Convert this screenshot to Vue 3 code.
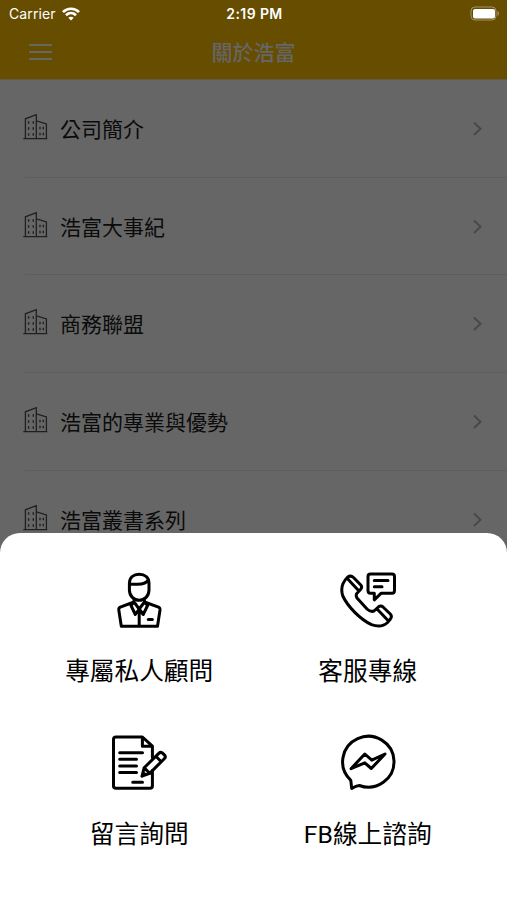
<script setup>
const items = ['公司簡介', '浩富大事紀', '商務聯盟', '浩富的專業與優勢', '浩富叢書系列']
const actions = [
  { icon: 'advisor', label: '專屬私人顧問' },
  { icon: 'phone', label: '客服專線' },
  { icon: 'message', label: '留言詢問' },
  { icon: 'messenger', label: 'FB線上諮詢' },
]
</script>

<template>
  <div class="screen">
    <header class="header">
      <div class="status">
        <div class="carrier">
          <span>Carrier</span>
          <svg width="18" height="14" viewBox="0 0 18 14" fill="none" stroke="#fff" stroke-width="2.7">
            <path d="M1 5.1C5.5.6 12.5.6 17 5.1" />
            <path d="M4 8.3C6.9 5.5 11.1 5.5 14 8.3" />
            <path d="M6.3 10.8C7.8 9.4 10.2 9.4 11.7 10.8L9 13.5Z" fill="#fff" stroke="none" />
          </svg>
        </div>
        <span class="time">2:19 PM</span>
        <svg class="battery" width="30" height="15" viewBox="0 0 30 15">
          <rect x="1" y="1" width="25" height="13" rx="4" fill="none" stroke="#a3946a" />
          <rect x="3" y="3" width="22" height="9.500" rx="2" fill="#fff" />
          <path d="M27.500 4.800Q30.500 7.500 27.500 10.200Z" fill="#a3946a" />
        </svg>
      </div>
      <div class="nav">
        <div class="burger"><i></i><i></i><i></i></div>
        <h1>關於浩富</h1>
        <span></span>
      </div>
    </header>
    <main class="list">
      <div v-for="item in items" :key="item" class="row">
        <svg class="building" width="26" height="28" viewBox="0 0 26 28" fill="none" stroke="#202020" stroke-width="1.3">
          <path d="M1.3 25.7H25.3M3.4 25.5V5.8L14.3 1.6V25.5M14.5 7.9L24.4 11V25.5" />
          <path stroke-width="1.4" stroke-dasharray="2.4 3.6" d="M6.6 8.3V24M11.3 8.3V24M18 13.8V24M21.3 13.8V24" />
        </svg>
        <span class="name">{{ item }}</span>
        <svg class="chevron" width="12" height="18" viewBox="0 0 12 18" fill="none" stroke="#484848" stroke-width="1.9">
          <path d="M2 2.5L8.5 8.7L2 15" />
        </svg>
      </div>
    </main>
    <section class="sheet">
      <div v-for="action in actions" :key="action.icon" class="action">
        <svg width="60" height="60" viewBox="0 0 60 60" fill="none" stroke="#000" stroke-width="3" stroke-linecap="round" stroke-linejoin="round">
          <template v-if="action.icon === 'advisor'">
            <path d="M20.400 13.500C20.400 7.500 24.500 4.200 30.200 4.200S40 7.500 40 13.500V20C40 26 35.500 30.300 30.200 30.300S20.400 26 20.400 20ZM20.500 14.300H28.500C33.500 14.300 37.500 13.300 39.500 9.500" />
            <path d="M25 30.500V32L11.300 37.200Q9.500 38 9.800 40L12.300 56.300H48.500L51 40Q51.200 38 49.500 37.200L35.500 32V30.500M30.200 39V56M25 32L22 35.500L26.300 44.500L30.200 39L25 32M35.500 32L38.600 35.500L34.200 44.500L30.200 39L35.500 32" />
            <path d="M39.300 49.500H43.300" />
          </template>
          <template v-else-if="action.icon === 'phone'">
            <path d="M32.500 4H54Q56.500 4 56.500 6.700V20.600Q56.500 23.300 54 23.300H43L36.300 29.800V23.300H32.500Q30 23.300 30 20.600V6.700Q30 4 32.500 4ZM36.300 10.600H50M36.300 16.700H44" />
            <path d="M9.500 7.200Q12.700 4.800 15.500 7.500L22.800 15Q24.600 17.200 22.500 19.500L19 23.300Q17.400 25 19 28L29 39Q32.500 42.300 36 41L40.300 37Q42.700 35 45 37L52.300 44Q54.500 46.500 52.200 49.300L49.500 52.500Q43.500 58.300 33.500 54.700C22 49 10 37 4.800 26C2.500 19 3.200 13.500 9.500 7.200ZM10 9.300L20.500 20.500M39.300 39.300L50 50.500" />
          </template>
          <template v-else-if="action.icon === 'message'">
            <path d="M43.400 37.500V53Q43.400 55.300 41 55.300H7Q4.500 55.300 4.500 53V6.300Q4.500 4 7 4H33.400L43.400 13.200V24.500M33.400 4V13.200H43.100" />
            <path d="M10.700 19.700H33.500M10.700 26.300H27.500M10.700 32.900H27.500M10.700 39.500H27.500M23.700 49.200H33.500" />
            <path d="M33 43.200L35.200 34.700L49.800 20.400Q51.500 18.700 53.300 19.900L55.800 22.400Q57 24.200 55.300 25.700L40.700 40.400ZM35.200 34.700L40.700 40.400M46.800 23.200L52.300 28.700M33 43.200L35.500 40.700" />
          </template>
          <template v-else>
            <path d="M12.800 47.300A25.700 25.400 0 1 1 21.300 52.500Q18 52.700 13.700 55.500Z" />
            <path d="M13 35.700L26.800 21L33.800 27.200L47 21L33.300 35.500L26.800 29.800Z" />
          </template>
        </svg>
        <span>{{ action.label }}</span>
      </div>
    </section>
  </div>
</template>

<style>
body {
  margin: 0;
  overflow: hidden;
}
</style>

<style scoped>
.screen {
  position: relative;
  width: 507px;
  height: 900px;
  overflow: hidden;
  background: #666;
  font-family: Inter, "Noto Sans CJK TC", sans-serif;
}
.header {
  height: 80px;
  box-sizing: border-box;
  background: #664d00;
  border-bottom: 1px solid #62594a;
}
.status {
  display: grid;
  grid-template-columns: 1fr auto 1fr;
  align-items: center;
  height: 27px;
  padding: 0 7px 0 9px;
  color: #fff;
  font-size: 14px;
}
.carrier {
  display: flex;
  align-items: center;
  gap: 6px;
  letter-spacing: 0.1px;
}
.time {
  font-size: 14px;
  font-weight: 600;
  letter-spacing: 0.4px;
}
.battery {
  justify-self: end;
}
.nav {
  display: grid;
  grid-template-columns: 1fr auto 1fr;
  align-items: center;
  height: 50px;
}
.burger {
  display: flex;
  flex-direction: column;
  gap: 4.5px;
  width: 23px;
  margin-left: 29px;
}
.burger i {
  height: 2.500px;
  background: #666;
}
h1 {
  margin: 2px 0 0;
  color: #666;
  font-size: 21px;
  line-height: 30px;
  font-weight: 500;
}
.row {
  display: flex;
  align-items: center;
  height: 97.7px;
  box-sizing: border-box;
  padding: 0 23px 0 22px;
  background: linear-gradient(#5e5e5e, #5e5e5e) 25px 100% / 100% 1px no-repeat;
}
.building {
  margin-bottom: 4px;
}
.name {
  flex: 1;
  margin: 2px 0 0 12px;
  color: #0b0b0b;
  font-size: 21px;
  line-height: 30px;
}
.sheet {
  position: absolute;
  left: 0;
  right: 0;
  top: 533px;
  bottom: 0;
  display: grid;
  grid-template-columns: 1fr 1fr;
  grid-template-rows: 163px 163px;
  box-sizing: border-box;
  padding: 37px 25px 0;
  background: #fff;
  border-radius: 20px 20px 0 0;
}
.action {
  display: flex;
  flex-direction: column;
  align-items: center;
  gap: 24px;
  color: #000;
  font-size: 24.7px;
  line-height: 36px;
  font-family: Roboto, "Noto Sans CJK TC", sans-serif;
}
</style>
